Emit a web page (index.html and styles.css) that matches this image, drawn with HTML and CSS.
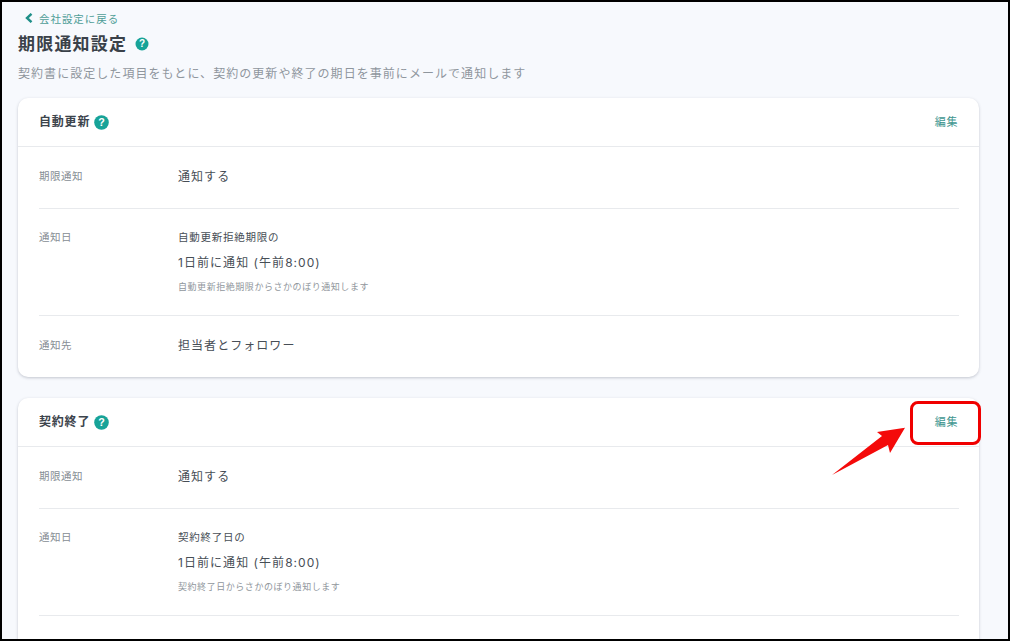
FILE: index.html
```html
<!DOCTYPE html>
<html lang="ja">
<head>
<meta charset="utf-8">
<title>期限通知設定</title>
<link rel="stylesheet" href="styles.css">
</head>
<body>
<div class="frame">
  <a class="back">
    <svg class="back-icon" width="8" height="10" viewBox="0 0 8 10"><path d="M6.5.8 2 5l4.500 4.200" fill="none" stroke="#1f8f88" stroke-width="2.4"/></svg>
    <span>会社設定に戻る</span>
  </a>
  <div class="title-row">
    <h1>期限通知設定</h1>
    <svg class="help" width="14" height="14" viewBox="0 0 14 14"><circle cx="7" cy="7" r="6.5" fill="#17a398"/><text x="7" y="10.2" text-anchor="middle" class="help-q">?</text></svg>
  </div>
  <p class="desc">契約書に設定した項目をもとに、契約の更新や終了の期日を事前にメールで通知します</p>

  <section class="card">
    <header class="card-head">
      <div class="card-title"><h2>自動更新</h2>
        <svg class="help" width="15" height="15" viewBox="0 0 14 14"><circle cx="7" cy="7" r="6.8" fill="#17a398"/><text x="7" y="10.2" text-anchor="middle" class="help-q">?</text></svg>
      </div>
      <a class="edit">編集</a>
    </header>
    <div class="rows">
      <div class="row short"><div class="label">期限通知</div><div class="value">通知する</div></div>
      <div class="row tall"><div class="label">通知日</div>
        <div class="stack"><div class="pre">自動更新拒絶期限の</div><div class="value">1日前に通知 (午前8:00)</div><div class="note">自動更新拒絶期限からさかのぼり通知します</div></div>
      </div>
      <div class="row short"><div class="label">通知先</div><div class="value">担当者とフォロワー</div></div>
    </div>
  </section>

  <section class="card">
    <header class="card-head">
      <div class="card-title"><h2>契約終了</h2>
        <svg class="help" width="15" height="15" viewBox="0 0 14 14"><circle cx="7" cy="7" r="6.8" fill="#17a398"/><text x="7" y="10.2" text-anchor="middle" class="help-q">?</text></svg>
      </div>
      <a class="edit">編集</a>
    </header>
    <div class="rows">
      <div class="row short"><div class="label">期限通知</div><div class="value">通知する</div></div>
      <div class="row tall"><div class="label">通知日</div>
        <div class="stack"><div class="pre">契約終了日の</div><div class="value">1日前に通知 (午前8:00)</div><div class="note">契約終了日からさかのぼり通知します</div></div>
      </div>
      <div class="row short"><div class="label">通知先</div><div class="value">担当者とフォロワー</div></div>
    </div>
  </section>

  <div class="callout"></div>
  <svg class="arrow" width="80" height="54" viewBox="0 0 80 54"><path d="M0 52 50 13 45 9 73 4.700 58 30 56 22Z" fill="#f40a0a"/></svg>
</div>
</body>
</html>
```
FILE: styles.css
```css
* { box-sizing: border-box; }
html, body { margin: 0; padding: 0; }
body {
  width: 1010px;
  height: 641px;
  overflow: hidden;
  font-family: "Inter", "Noto Sans CJK JP", "Noto Sans", sans-serif;
  color: #3c444c;
}
.frame {
  position: relative;
  width: 1010px;
  height: 641px;
  overflow: hidden;
  background: #f7f9fd;
  border: 2px solid #000;
  padding: 9px 29px 0 16px;
}
.back {
  display: flex;
  align-items: center;
  gap: 6px;
  height: 14px;
  padding-left: 7px;
  font-size: 10.5px;
  letter-spacing: .95px;
  color: #4f9e98;
}
.title-row {
  display: flex;
  align-items: center;
  gap: 8px;
  margin-top: 7px;
  height: 24px;
}
h1 {
  margin: 0;
  font-size: 17px;
  line-height: 24px;
  letter-spacing: 1.2px;
  font-weight: 700;
  color: #3a4149;
}
.help { flex: none; display: block; }
.help-q { font: 700 10px "Liberation Sans", sans-serif; fill: #fff; }
.desc {
  margin: 9px 0 0;
  font-size: 12px;
  line-height: 18px;
  letter-spacing: 1.05px;
  color: #8f969d;
}
.card {
  margin-top: 15px;
  background: #fff;
  border-radius: 10px;
  box-shadow: 0 1px 3px rgba(60, 70, 90, .28);
}
.card + .card { margin-top: 21px; }
.card-head {
  display: flex;
  align-items: center;
  justify-content: space-between;
  height: 49px;
  padding: 0 21px;
  border-bottom: 1px solid #e8eaed;
}
.card-title { display: flex; align-items: center; gap: 4px; }
h2 {
  margin: 0;
  font-size: 12px;
  line-height: 18px;
  letter-spacing: .8px;
  font-weight: 700;
  color: #3c444c;
}
.edit {
  margin-bottom: 2px;
  font-size: 11px;
  letter-spacing: .6px;
  color: #3f9690;
}
.rows { padding: 0 20px 0 21px; }
.row {
  display: flex;
  border-bottom: 1px solid #e8eaed;
}
.row:last-child { border-bottom: 0; height: 61px; }
.short { height: 62px; align-items: center; padding-bottom: 2px; }
.tall { height: 107px; padding-top: 20px; }
.label {
  width: 139px;
  flex: none;
  font-size: 10.5px;
  line-height: 18px;
  letter-spacing: .5px;
  color: #868d94;
}
.value {
  font-size: 12px;
  line-height: 18px;
  letter-spacing: 1.05px;
  color: #474e56;
}
.stack { display: flex; flex-direction: column; }
.pre {
  font-size: 10.5px;
  line-height: 18px;
  letter-spacing: .75px;
  color: #474e56;
}
.stack .value { margin-top: 7px; }
.note {
  margin-top: 8px;
  font-size: 9px;
  line-height: 14px;
  letter-spacing: .55px;
  color: #90969c;
}
.callout {
  position: absolute;
  left: 908px;
  top: 399px;
  width: 71px;
  height: 44px;
  border: 3px solid #f00000;
  border-radius: 8px;
}
.arrow {
  position: absolute;
  left: 830px;
  top: 421px;
}
```
